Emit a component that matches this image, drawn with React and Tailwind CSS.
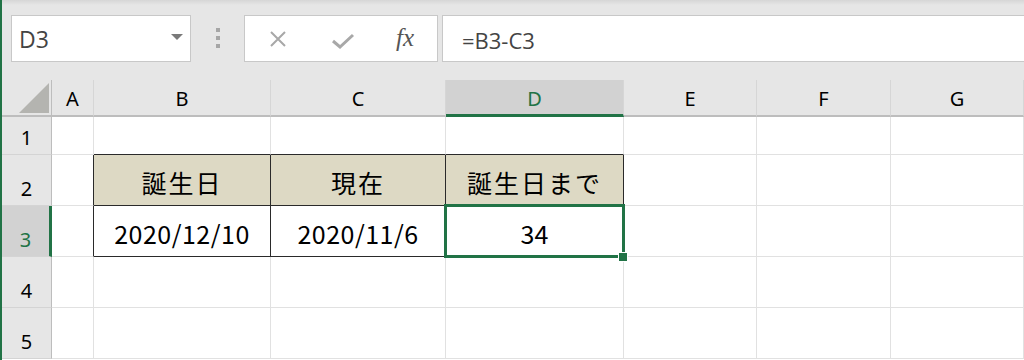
import React from "react";

function RowHeader({ n, selected }) {
  return (
    <div
      className={
        "flex items-end justify-center pb-[6px] border-b border-[#d4d4d4] text-[20px] leading-none " +
        (selected
          ? "bg-[#d2d2d2] text-[#217346] border-r-[3px] border-r-[#217346]"
          : "bg-[#e6e6e6] text-black border-r border-r-[#bdbdbd]")
      }
      style={{ fontFamily: '"Noto Sans", sans-serif' }}
    >
      {n}
    </div>
  );
}

function ColHeader({ c, selected }) {
  return (
    <div
      className={
        "flex items-center justify-center pt-[3px] text-[20px] leading-none border-r border-r-[#d6d6d6] " +
        (selected
          ? "bg-[#d2d2d2] text-[#217346] border-b-[3px] border-b-[#217346]"
          : "bg-[#e6e6e6] text-black border-b-2 border-b-[#bdbdbd]")
      }
      style={{ fontFamily: '"Noto Sans", sans-serif' }}
    >
      {c}
    </div>
  );
}

function Cell({ children, cls = "", tan = false, darkR = false, darkB = false }) {
  return (
    <div
      className={
        "relative flex items-center justify-center pt-[4px] text-[25px] leading-none text-black " +
        (tan ? "bg-[#ddd9c4] " : "bg-white ") +
        (darkR ? "border-r border-r-[#2a2a2a] " : "border-r border-r-[#e1e1e1] ") +
        (darkB ? "border-b border-b-[#2a2a2a] " : "border-b border-b-[#e1e1e1] ") +
        cls
      }
      style={{ fontFamily: '"Noto Sans CJK JP", "Noto Sans", sans-serif' }}
    >
      {children}
    </div>
  );
}

export default function App() {
  const cols = ["A", "B", "C", "D", "E", "F", "G"];
  return (
    <div className="w-[1024px] h-[360px] overflow-hidden flex bg-white">
      <div className="w-[2px] shrink-0 bg-[#217346]" />
      <div className="flex-1 flex flex-col min-w-0">
        {/* toolbar */}
        <div className="h-[80px] shrink-0 bg-[linear-gradient(#d6d6d6,#e6e6e6_5px)] flex items-start pt-[15px] pl-[9px]">
          {/* name box */}
          <div className="w-[180px] h-[47px] bg-white border border-[#c8c8c8] flex items-center pl-[7px] pr-[7px]">
            <span
              className="flex-1 text-[23px] text-[#444] leading-none pt-[2px]"
              style={{ fontFamily: '"Open Sans", "Noto Sans", sans-serif' }}
            >
              D3
            </span>
            <svg width="12" height="6" viewBox="0 0 12 6" className="mb-[4px]">
              <path d="M0 0 L12 0 L6 6 Z" fill="#7a7a7a" />
            </svg>
          </div>
          {/* dots */}
          <div className="w-[53px] h-[47px] flex flex-col items-center justify-center gap-[4px] pb-[1px]">
            <div className="w-[4px] h-[4px] bg-[#a6a6a6]" />
            <div className="w-[4px] h-[4px] bg-[#a6a6a6]" />
            <div className="w-[4px] h-[4px] bg-[#a6a6a6]" />
          </div>
          {/* buttons box */}
          <div className="w-[194px] h-[47px] bg-white border border-[#c8c8c8] flex items-center">
            <div className="w-[66px] flex justify-center">
              <svg width="18" height="18" viewBox="0 0 18 18">
                <path d="M2 2 L16 16 M16 2 L2 16" stroke="#a8a8a8" strokeWidth="2" fill="none" />
              </svg>
            </div>
            <div className="w-[64px] flex justify-center pt-[4px]">
              <svg width="24" height="16" viewBox="0 0 24 16">
                <path d="M2 8 L9 14 L22 2" stroke="#a8a8a8" strokeWidth="3" fill="none" />
              </svg>
            </div>
            <div
              className="w-[60px] flex justify-center text-[25px] italic text-[#555] leading-none pb-[2px]"
              style={{ fontFamily: '"Liberation Serif", serif' }}
            >
              fx
            </div>
          </div>
          {/* formula box */}
          <div className="ml-[4px] flex-1 h-[47px] bg-white border border-[#c8c8c8] border-r-0 flex items-center pl-[19px]">
            <span
              className="text-[22px] text-[#444] leading-none pt-[2px]"
              style={{ fontFamily: '"Open Sans", "Noto Sans", sans-serif' }}
            >
              =B3-C3
            </span>
          </div>
        </div>

        {/* sheet */}
        <div className="flex-1 grid grid-cols-[50px_42px_177px_175px_178px_133px_134px_1fr] grid-rows-[37px_38px_51px_51px_51px_51px]">
          {/* header row */}
          <div className="bg-[#e6e6e6] border-r border-r-[#bdbdbd] border-b-2 border-b-[#bdbdbd] flex items-end justify-end pr-[2px] pb-[2px]">
            <svg width="30" height="30" viewBox="0 0 30 30">
              <path d="M30 0 L30 30 L0 30 Z" fill="#b4b4b0" />
            </svg>
          </div>
          {cols.map((c) => (
            <ColHeader key={c} c={c} selected={c === "D"} />
          ))}

          {/* row 1 */}
          <RowHeader n={1} />
          <Cell />
          <Cell darkB />
          <Cell darkB />
          <Cell darkB />
          <Cell />
          <Cell />
          <Cell />

          {/* row 2 */}
          <RowHeader n={2} />
          <Cell darkR />
          <Cell tan darkR darkB>
            <span className="tracking-[2px]">誕生日</span>
          </Cell>
          <Cell tan darkR darkB>
            <span className="tracking-[2px]">現在</span>
          </Cell>
          <Cell tan darkR darkB>
            <span className="tracking-[2px]">誕生日まで</span>
          </Cell>
          <Cell />
          <Cell />
          <Cell />

          {/* row 3 */}
          <RowHeader n={3} selected />
          <Cell darkR />
          <Cell darkR darkB>
            <span className="tracking-[0.5px]">2020/12/10</span>
          </Cell>
          <Cell darkR darkB>
            <span className="tracking-[0.5px]">2020/11/6</span>
          </Cell>
          <Cell darkR darkB cls="z-10">
            34
            <div className="absolute -left-[2px] -top-[2px] -right-[2px] -bottom-[2px] border-[3px] border-[#217346] pointer-events-none">
              <div className="absolute -right-[6px] -bottom-[7px] w-[10px] h-[10px] bg-[#217346] border border-white" />
            </div>
          </Cell>
          <Cell />
          <Cell />
          <Cell />

          {/* row 4 */}
          <RowHeader n={4} />
          {cols.map((c) => (
            <Cell key={"r4" + c} />
          ))}

          {/* row 5 */}
          <RowHeader n={5} />
          {cols.map((c) => (
            <Cell key={"r5" + c} />
          ))}
        </div>
      </div>
    </div>
  );
}
